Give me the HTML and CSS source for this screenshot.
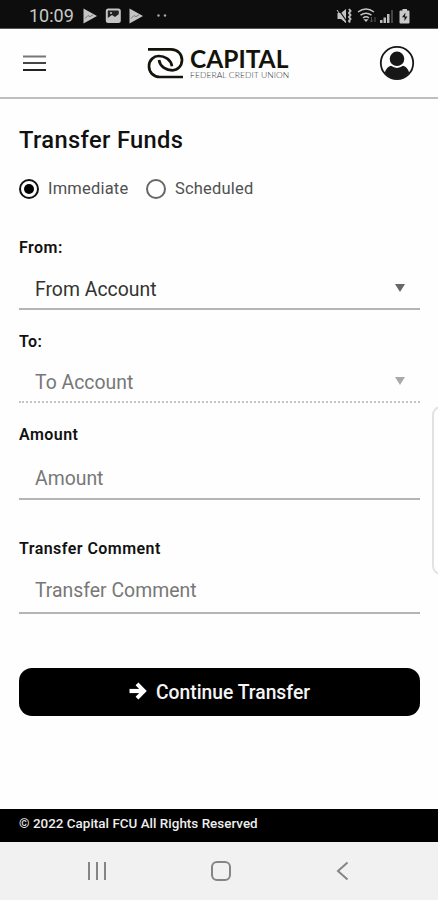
FILE: index.html
```html
<!DOCTYPE html>
<html lang="en">
<head>
<meta charset="utf-8">
<title>Transfer Funds</title>
<link rel="stylesheet" href="styles.css">
</head>
<body>
<div class="status">
  <span class="time">10:09</span>
  <svg class="status-left" width="88" height="18" viewBox="0 0 88 18">
    <path d="M1.500 1.500 15 9 1.500 16.500z" fill="#c4c4c4"/><path d="M3 11.500 6 8.500l2 1.200 3-2" fill="none" stroke="#777" stroke-width="1"/>
    <rect x="24.800" y="2.600" width="13" height="12.500" rx="1.500" fill="#222" stroke="#c4c4c4" stroke-width="2"/><path d="M25 11.500 30 8l3 2 4-3v8H25z" fill="#c4c4c4"/><circle cx="29" cy="6" r="1" fill="#c4c4c4"/>
    <path d="M47.500 1.500 61 9l-13.500 7.500z" fill="#c4c4c4"/><path d="M49 11.500 52 8.500l2 1.200 3-2" fill="none" stroke="#777" stroke-width="1"/>
    <circle cx="76.500" cy="8.500" r="1.200" fill="#aaa"/><circle cx="83" cy="8.500" r="1.200" fill="#aaa"/>
  </svg>
  <svg class="status-right" width="76" height="18" viewBox="0 0 76 18">
    <path d="M1.500 6H5l5-4v14l-5-4H1.500z" fill="#c4c4c4"/><path d="M2.500 2.500 10.500 14" stroke="#111" stroke-width="1.200"/><path d="M1 3 9.500 15.500" stroke="#c4c4c4"/><path d="M13 2l1.500 2-1.500 2 1.500 2-1.500 2 1.500 2-1.500 2 1 1.500" fill="none" stroke="#bbb" stroke-width="2"/>
    <g fill="none" stroke="#c4c4c4" stroke-width="1.500"><path d="M22 5q8-6 16 0"/><path d="M24.500 8.200q5.500-4 11 0"/><path d="M27 11q3-2.500 6 0"/></g><path d="M27.500 12.200h5L30 15z" fill="#c4c4c4"/><path d="M35.500 10v5m-1.500-1.500 1.500 1.500 1.500-1.500M39 15v-5" fill="none" stroke="#555"/>
    <g fill="#bdbdbd"><path d="M44 13h2.500v3H44zM47.500 10.500h2.500V16h-2.500z"/><path d="M51 7h2.500v9H51z"/><path d="M55 3h2v13h-2z" fill="#444"/></g>
    <path d="M66.500 2h4.500v1.500h1.500q1 0 1 1V15.500q0 1-1 1h-8q-1 0-1-1V4.500q0-1 1-1h2z" fill="#c9c9c9"/><path d="M69.500 5.500 66 10.200h2.500V14l3-4.500H69z" fill="#181818"/>
  </svg>
</div>
<header class="header">
  <svg class="menu" width="24" height="18" viewBox="0 0 24 18"><path d="M0 2.500h23" stroke="#777" stroke-width="2"/><path d="M0 9h23" stroke="#444" stroke-width="2"/><path d="M0 16h23" stroke="#222" stroke-width="2"/></svg>
  <div class="brand">
    <svg width="37" height="33" viewBox="0 0 37 33" fill="none" stroke="#14130a" stroke-width="2.700"><path d="M1 2.300H24C31 2.300 35 7.500 35 13 35 19 30.500 23.300 25.500 23.300 19 23.300 13 19.500 12 13"/><path d="M36 30H13C6 30 2 25 2 19.300 2 13 7 9 11.500 9 18 9 24 12.800 25 19.300"/></svg>
    <div class="wordmark"><span class="word-main">CAPITAL</span><span class="word-sub">FEDERAL CREDIT UNION</span></div>
  </div>
  <svg class="avatar" width="36" height="36" viewBox="0 0 36 36"><circle cx="18" cy="18" r="16.200" fill="#fff" stroke="#171717" stroke-width="1.800"/><circle cx="18" cy="13.800" r="7.300" fill="#171717"/><path d="M5.800 27.500Q8 21.500 12 20.800 18 25 24 20.800 28 21.500 30.200 27.500 25.500 34 18 34T5.800 27.500z" fill="#171717"/></svg>
</header>
<main class="main">
  <h1 class="title"><span>Transfer Funds</span></h1>
  <div class="radios">
    <span class="radio on"></span><span class="opt first">Immediate</span>
    <span class="radio"></span><span class="opt">Scheduled</span>
  </div>
  <div class="group from"><div class="label">From:</div><div class="field"><span>From Account</span><i class="caret"></i></div></div>
  <div class="group to"><div class="label">To:</div><div class="field"><span>To Account</span><i class="caret"></i></div></div>
  <div class="group amount"><div class="label">Amount</div><div class="field"><span>Amount</span></div></div>
  <div class="group comment"><div class="label">Transfer Comment</div><div class="field"><span>Transfer Comment</span></div></div>
  <button class="submit"><svg width="18" height="18" viewBox="0 0 18 18" fill="none" stroke="#fff"><path d="M.5 9H14" stroke-width="4.200"/><path d="M8 1.800 15 9l-7 7.200" stroke-width="4"/></svg><span>Continue Transfer</span></button>
</main>
<footer class="footer"><span>© 2022 Capital FCU All Rights Reserved</span></footer>
<nav class="nav">
  <svg width="20" height="20" viewBox="0 0 20 20"><path d="M2 1v18M10 1v18M18 1v18" stroke="#858585" stroke-width="2"/></svg>
  <svg class="home" width="22" height="22" viewBox="0 0 22 22"><rect x="2" y="2" width="18" height="18" rx="5" fill="none" stroke="#858585" stroke-width="2"/></svg>
  <svg width="16" height="20" viewBox="0 0 16 20"><path d="M12.500 1.500 3 10l9.500 8.500" fill="none" stroke="#858585" stroke-width="2"/></svg>
</nav>
<div class="edge-handle"></div>
</body>
</html>
```
FILE: styles.css
```css
* { box-sizing: border-box; }
body {
  margin: 0;
  width: 438px;
  height: 900px;
  position: relative;
  overflow: hidden;
  display: flex;
  flex-direction: column;
  background: #fefefe;
  font-family: Roboto, sans-serif;
  color: #111;
}
svg { display: block; flex: none; }
span { white-space: nowrap; }
.status {
  height: 29px;
  flex: none;
  display: flex;
  align-items: center;
  padding: 3px 26px 0 29px;
  background: #0d0d0d;
  border-bottom: 1px solid #555;
}
.time { width: 53px; font-size: 18px; color: #c9c9c9; }
.status-right { margin-left: auto; }
.header {
  height: 70px;
  flex: none;
  display: flex;
  align-items: center;
  padding: 0 23px;
  border-bottom: 2px solid #bfbfbf;
}
.header .avatar { margin-left: auto; }
.brand { display: flex; gap: 6px; margin-left: 100px; }
.wordmark { display: flex; flex-direction: column; }
.word-main { font: 700 24.500px/23px Lato, sans-serif; color: #14130a; }
.word-sub { font: 300 8.500px/9px Lato, sans-serif; letter-spacing: 0.08px; color: #333; margin-top: 1px; }
.main { height: 710px; flex: none; padding: 0 18px 0 19px; }
.title { margin: 0; height: 82px; line-height: 83px; font-size: 23.700px; font-weight: 500; letter-spacing: 0.35px; }
.radios { height: 16px; display: flex; align-items: center; }
.radio {
  width: 20px;
  height: 20px;
  flex: none;
  border: 2px solid #666;
  border-radius: 50%;
  display: grid;
  place-items: center;
}
.radio.on { border-color: #111; }
.radio.on::after { content: ""; width: 10px; height: 10px; border-radius: 50%; background: #000; }
.opt { margin-left: 9px; font-size: 16.500px; letter-spacing: 0.2px; color: #505050; line-height: 16px; margin-bottom: 1px; }
.opt.first { width: 98px; }
.label { height: 20px; line-height: 21px; font-size: 16px; font-weight: 600; letter-spacing: 0.45px; }
.from .label { line-height: 22px; }
.field {
  height: 53px;
  display: flex;
  align-items: center;
  padding: 14px 15px 0 16px;
  border-bottom: 2px solid #b5b5b5;
  font-size: 19.400px;
  color: #777;
}
.caret { margin-left: auto; border: 5px solid transparent; border-top: 8px solid #666; border-bottom: 0; margin-bottom: 3px; }
.from { margin-top: 40px; }
.from .field { color: #333; }
.to { margin-top: 21px; }
.to .field { height: 52px; padding-top: 13px; border-bottom: 2px dotted #c4c4c4; }
.to .caret { border-top-color: #aaa; }
.amount { margin-top: 21px; }
.amount .field, .comment .field { height: 56px; }
.comment { margin-top: 38px; }
.comment .field { padding-top: 11px; }
.submit {
  width: 401px;
  height: 48px;
  margin: 54px 0 0;
  padding: 0;
  display: flex;
  justify-content: center;
  align-items: center;
  gap: 9px;
  border: 0;
  border-radius: 13px;
  background: #000;
  color: #f5f5f5;
  font: 500 19.300px Roboto, sans-serif;
}
.submit svg { margin-top: -3px; }
.submit span { margin-top: 1px; }
.footer {
  height: 33px;
  flex: none;
  padding: 0 19px;
  background: #000;
  color: #eee;
  font-size: 13.400px;
  font-weight: 500;
  letter-spacing: 0.03px;
  line-height: 30px;
}
.nav { flex: 1; display: flex; align-items: center; padding: 0 87px; justify-content: space-between; background: #f1f1f1; }
.edge-handle {
  position: absolute;
  left: 432px;
  top: 406px;
  width: 20px;
  height: 169px;
  border: 2px solid #e2e2e2;
  border-radius: 9px;
}
```
